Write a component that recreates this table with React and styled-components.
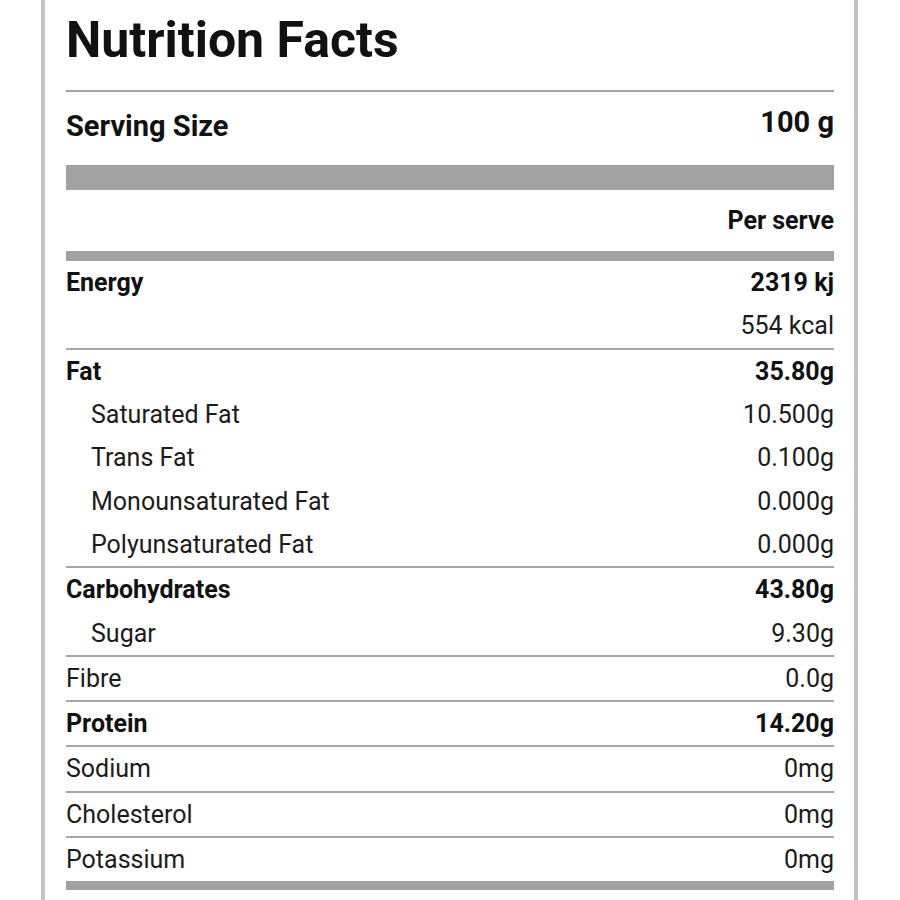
import React from "react";
import styled, { createGlobalStyle } from "styled-components";

const GlobalStyle = createGlobalStyle`
  html, body {
    margin: 0;
    padding: 0;
    background: #ffffff;
  }
  body {
    font-family: Roboto, "Liberation Sans", Arial, sans-serif;
    color: #111111;
  }
`;

const Page = styled.div`
  padding-left: 41px;
  height: 900px;
  overflow: hidden;
`;

const Panel = styled.div`
  box-sizing: border-box;
  width: 817px;
  min-height: 900px;
  border-left: 4px solid #c3c3c3;
  border-right: 4px solid #c3c3c3;
  padding: 0 20px 0 21px;
`;

const Title = styled.h1`
  margin: 0;
  padding-top: 15px;
  height: 90px;
  box-sizing: border-box;
  font-size: 50px;
  line-height: 50px;
  font-weight: 700;
`;

const Rule = styled.div`
  height: ${(p) => p.$size}px;
  background: #a2a2a2;
`;

const ServingRow = styled.div`
  display: flex;
  justify-content: space-between;
  align-items: flex-start;
  height: 73px;
  font-size: 29px;
  line-height: 29px;
  font-weight: 700;
`;

const Cell = styled.span`
  padding-top: ${(p) => p.$top}px;
`;

const HeadRow = styled.div`
  display: flex;
  justify-content: flex-end;
  height: 61px;
  padding-top: 18px;
  box-sizing: border-box;
  font-size: 25px;
  line-height: 25px;
  font-weight: 700;
`;

const Group = styled.div`
  border-bottom: 2px solid #a6a6a6;

  &:last-child {
    border-bottom: none;
  }
`;

const Row = styled.div`
  display: flex;
  justify-content: space-between;
  align-items: center;
  height: 43.3px;
  font-size: 25px;
  line-height: 25px;
  font-weight: ${(p) => (p.$bold ? 700 : 400)};
  color: ${(p) => (p.$bold ? "#111111" : "#1c1c1c")};
`;

const Label = styled.span`
  padding-left: ${(p) => (p.$sub ? 25 : 0)}px;
`;

const groups = [
  [
    { label: "Energy", value: "2319 kj", bold: true },
    { label: "", value: "554 kcal" },
  ],
  [
    { label: "Fat", value: "35.80g", bold: true },
    { label: "Saturated Fat", value: "10.500g", sub: true },
    { label: "Trans Fat", value: "0.100g", sub: true },
    { label: "Monounsaturated Fat", value: "0.000g", sub: true },
    { label: "Polyunsaturated Fat", value: "0.000g", sub: true },
  ],
  [
    { label: "Carbohydrates", value: "43.80g", bold: true },
    { label: "Sugar", value: "9.30g", sub: true },
  ],
  [{ label: "Fibre", value: "0.0g" }],
  [{ label: "Protein", value: "14.20g", bold: true }],
  [{ label: "Sodium", value: "0mg" }],
  [{ label: "Cholesterol", value: "0mg" }],
  [{ label: "Potassium", value: "0mg" }],
];

function NutritionPanel() {
  return (
    <Panel>
      <Title>Nutrition Facts</Title>
      <Rule $size={2} />
      <ServingRow>
        <Cell $top={20}>Serving Size</Cell>
        <Cell $top={16}>100 g</Cell>
      </ServingRow>
      <Rule $size={25} />
      <HeadRow>Per serve</HeadRow>
      <Rule $size={10} />
      <div>
        {groups.map((rows, i) => (
          <Group key={i}>
            {rows.map((r, j) => (
              <Row key={j} $bold={r.bold}>
                <Label $sub={r.sub}>{r.label}</Label>
                <span>{r.value}</span>
              </Row>
            ))}
          </Group>
        ))}
      </div>
      <Rule $size={9} />
    </Panel>
  );
}

export default function App() {
  return (
    <>
      <GlobalStyle />
      <Page>
        <NutritionPanel />
      </Page>
    </>
  );
}
